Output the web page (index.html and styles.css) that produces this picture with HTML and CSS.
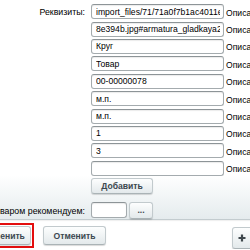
FILE: index.html
```html
<!DOCTYPE html>
<html lang="ru">
<head>
    <meta charset="UTF-8">
    <title>Элемент каталога</title>
    <link rel="stylesheet" href="styles.css">
</head>
<body>

<div class="panel">
    <div class="form-row">
        <div class="label label-top">Реквизиты:</div>
        <div class="fields">
            <div class="prop"><input class="field" type="text" value="import_files/71/71a0f7b1ac4011e"><span class="desc">Описание</span></div>
            <div class="prop"><input class="field" type="text" value="8e394b.jpg#armatura_gladkaya2"><span class="desc">Описание</span></div>
            <div class="prop"><input class="field" type="text" value="Круг"><span class="desc">Описание</span></div>
            <div class="prop"><input class="field" type="text" value="Товар"><span class="desc">Описание</span></div>
            <div class="prop"><input class="field" type="text" value="00-00000078"><span class="desc">Описание</span></div>
            <div class="prop"><input class="field" type="text" value="м.п."><span class="desc">Описание</span></div>
            <div class="prop"><input class="field" type="text" value="м.п."><span class="desc">Описание</span></div>
            <div class="prop"><input class="field" type="text" value="1"><span class="desc">Описание</span></div>
            <div class="prop"><input class="field" type="text" value="3"><span class="desc">Описание</span></div>
            <div class="prop"><input class="field" type="text" value=""><span class="desc">Описание</span></div>
            <button class="btn btn-add">Добавить</button>
        </div>
    </div>

    <div class="form-row row-rec">
        <div class="label">С этим товаром рекомендуем:</div>
        <div class="fields inline">
            <input class="field field-small" type="text" value="">
            <button class="btn btn-dots">...</button>
        </div>
    </div>
</div>

<div class="footer">
    <div class="buttons">
        <span class="save-wrap"><button class="btn btn-save">Применить</button></span>
        <button class="btn btn-cancel">Отменить</button>
    </div>
    <button class="btn btn-plus" title="Добавить">
        <svg width="8" height="8" viewBox="0 0 8 8"><path d="M4 0.5v7M0.5 4h7" stroke="#3f484d" stroke-width="2.2"/></svg>
    </button>
</div>

</body>
</html>
```

FILE: styles.css
```css
body {
    margin: 0;
    padding: 0;
    font-family: "Liberation Sans", Arial, sans-serif;
    font-size: 8.6px;
    color: #000;
    background-color: #fff;
    overflow: hidden;
}
.panel {
    height: 220px;
    padding-top: 4px;
    box-sizing: border-box;
    background: linear-gradient(to bottom, #fff 0, #fff 175px, #e4ebed 220px);
    border-bottom: 1px solid #c3cccf;
    box-shadow: 0 1px 1px rgba(0, 0, 0, 0.06);
}
.form-row {
    display: flex;
}
.label {
    width: 85px;
    flex-shrink: 0;
    display: flex;
    justify-content: flex-end;
    white-space: nowrap;
    padding-top: 4px;
    font-size: 8.8px;
}
.label-top {
    padding-top: 3px;
}
.fields {
    margin-left: 6px;
    display: flex;
    flex-direction: column;
    gap: 2px;
}
.fields.inline {
    flex-direction: row;
    align-items: flex-start;
    gap: 2px;
}
.prop {
    display: flex;
    align-items: center;
    white-space: nowrap;
    height: 15.4px;
}
.field {
    width: 133px;
    height: 15px;
    box-sizing: border-box;
    padding: 0 3px 0 4px;
    font-family: inherit;
    font-size: 8.6px;
    color: #000;
    border: 1px solid #a4abae;
    border-top-color: #8d9497;
    border-radius: 3px;
    background: #fff;
    box-shadow: inset 0 1px 1px rgba(0, 0, 0, 0.08);
    outline: none;
}
.desc {
    margin-left: 2px;
    padding-top: 2px;
}
.btn {
    font-family: inherit;
    font-size: 8.6px;
    font-weight: bold;
    color: #3c4850;
    background: linear-gradient(to bottom, #fdfefe, #e3e9eb);
    border: 1px solid #c2cacd;
    border-bottom-color: #aab3b6;
    border-radius: 3px;
    box-shadow: 0 1px 1px rgba(0, 0, 0, 0.15);
    padding: 0;
    cursor: pointer;
}
.btn-add {
    width: 62px;
    height: 16px;
}
.row-rec {
    margin-top: 8px;
}
.row-rec .label {
    padding-top: 4px;
}
.field-small {
    width: 36px;
    height: 16px;
}
.btn-dots {
    width: 24px;
    height: 17px;
}
.footer {
    display: flex;
    justify-content: space-between;
    align-items: flex-start;
    padding-top: 3px;
}
.buttons {
    display: flex;
    align-items: flex-start;
    gap: 9px;
}
.save-wrap {
    display: flex;
    margin-left: -32px;
    padding: 1px;
    border: 2px solid #e30e0e;
}
.btn-save {
    width: 60px;
    height: 19px;
}
.btn-cancel {
    width: 63px;
    height: 19px;
    margin-top: 3px;
}
.btn-plus {
    width: 24px;
    height: 22px;
    margin-top: 4px;
    margin-right: -6px;
    display: flex;
    align-items: center;
    padding-left: 5px;
}
```
